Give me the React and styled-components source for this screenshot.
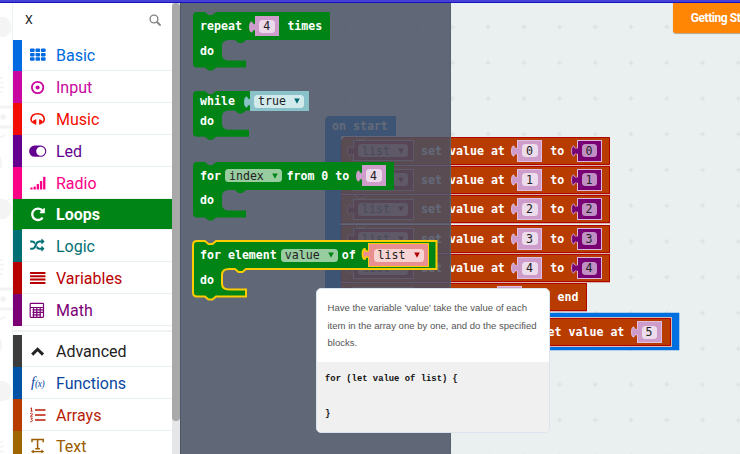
import React from "react";
import styled, { createGlobalStyle, css } from "styled-components";

const GlobalStyle = createGlobalStyle`
  * { box-sizing: border-box; }
  body { margin: 0; overflow: hidden; background: #fff; }
`;

const GREEN = "#008415";
const MONO = '"DejaVu Sans Mono", monospace';

/* ---------- page frame ---------- */

const Page = styled.div`
  width: 740px;
  height: 454px;
  overflow: hidden;
  display: flex;
  flex-direction: column;
  font-family: Roboto, sans-serif;
`;
const TopBar = styled.header`
  flex: none;
  height: 3px;
  background: #4741d6;
  border-bottom: 1px solid #1512c4;
`;
const Main = styled.main`
  flex: 1;
  min-height: 0;
  display: flex;
`;
const Margin = styled.div`
  flex: none;
  width: 13px;
  overflow: hidden;
  border-right: 1px solid #ecf3f4;
`;

/* ---------- toolbox ---------- */

const Toolbox = styled.nav`
  flex: none;
  width: 159px;
  background: #fff;
  overflow: hidden;
`;
const Search = styled.div`
  height: 36.6px;
  display: flex;
  align-items: center;
  justify-content: space-between;
  padding: 0 11px 3px 12px;
  font-size: 12.3px;
  color: #222;
`;
const Category = styled.div`
  display: flex;
  align-items: center;
  height: 31.8px;
  border-left: 9px solid ${(p) => p.$edge || p.$color};
  padding-left: 7px;
  gap: 11px;
  font-size: 16px;
  line-height: 20px;
  color: ${(p) => p.$color};
  box-shadow: inset 0 -1px 0 #e9f1f2;
  ${(p) =>
    p.$active &&
    css`
      background: ${GREEN};
      color: #fff;
      font-weight: 700;
    `}
  svg { flex: none; overflow: visible; }
`;
const Label = styled.span`
  padding-top: 2px;
`;
const Divider = styled.div`
  height: 9.4px;
  padding-top: 4px;
  &::after {
    content: "";
    display: block;
    height: 2px;
    background: #eef3f4;
  }
`;
const ScrollTrack = styled.div`
  flex: none;
  width: 8px;
  background: #e4e6e8;
`;
const ScrollThumb = styled.div`
  height: 418px;
  border-radius: 4px;
  background: #a9a9a9;
`;

/* ---------- workspace ---------- */

const Workspace = styled.section`
  position: relative;
  flex: 1;
  overflow: hidden;
  background: #eaf0f0;
`;
const Grid = styled.svg`
  display: block;
`;
const Flyout = styled.aside`
  position: absolute;
  left: 0;
  top: 0;
  width: 271px;
  height: 451px;
  background: rgba(72, 80, 97, 0.855);
  border-left: 1px solid #4d5666;
  border-right: 1px solid #566170;
`;
const Node = styled.div`
  position: absolute;
  left: ${(p) => p.$x - 180}px;
  top: ${(p) => p.$y - 3}px;
  font: 700 11.6px/14px ${MONO};
  color: #fff;
  white-space: pre;
`;
const Shape = styled.svg`
  position: absolute;
  left: 0;
  top: 0;
  overflow: visible;
`;
const Row = styled.div`
  position: relative;
  display: flex;
  align-items: center;
  height: ${(p) => p.$h}px;
  padding-left: ${(p) => p.$pad ?? 7}px;
`;
const Word = styled.span`
  margin-left: ${(p) => p.$ml || 0}px;
`;

const ReporterBox = styled.span`
  position: relative;
  flex: none;
  display: flex;
  align-items: center;
  justify-content: center;
  width: ${(p) => p.$w}px;
  height: ${(p) => p.$h || 20.5}px;
  margin-left: ${(p) => p.$ml}px;
  background: ${(p) => p.$fill};
  border: ${(p) => p.$bw || 1}px solid ${(p) => p.$line || p.$fill};
`;
const Tab = styled.svg`
  position: absolute;
  left: -8px;
  top: 4px;
  overflow: visible;
`;
const Pill = styled.span`
  flex: none;
  display: flex;
  align-items: center;
  justify-content: space-between;
  height: 13px;
  width: ${(p) => p.$w}px;
  margin-left: ${(p) => p.$ml || 0}px;
  padding: 0 4px;
  border-radius: 3.5px;
  background: ${(p) => p.$bg};
  color: ${(p) => p.$ink || "#222"};
  font-weight: 400;
`;

const Arrow = ({ color }) => (
  <svg width="6" height="6" viewBox="0 0 6 6">
    <path d="M0.2 0.6H5.8L3 5.8Z" fill={color} />
  </svg>
);

function Reporter({ fill, line, outline, children, ...rest }) {
  return (
    <ReporterBox $fill={fill} $line={line} {...rest}>
      <Tab width="8" height="12" viewBox="0 0 8 12">
        <path
          d="M7.6 3.2C5.6 3.9 4.4 3 3.8 0.9C0.8 0.300 0.8 11.700 3.8 11.1C4.4 9 5.6 8.4 7.6 9"
          fill={fill}
          stroke={outline || fill}
          strokeWidth={rest.$bw ? 1.8 : 1}
        />
        <path d="M6 3.6H9V8.6H6Z" fill={fill} />
      </Tab>
      {children}
    </ReporterBox>
  );
}

const NumberBlock = ({ value, ml }) => (
  <Reporter fill="#cf9dcb" $w={24} $ml={ml}>
    <Pill $w={15.5} $bg="#ecd9ea">{value}</Pill>
  </Reporter>
);

function clawPath(w, h, open, foot) {
  const b = h + open;
  const t = b + 7;
  return (
    `M0 4Q0 0 4 0H12l3.5 3h4l3.5-3H${w}V${h}H53l-3.5 3h-4l-3.5-3H36` +
    `Q29 ${h} 29 ${h + 6}V${b - 6}Q29 ${b} 36 ${b}H${foot}V${t}H23` +
    `l-3.5 3h-4l-3.5-3H4Q0 ${t} 0 ${t - 4}Z`
  );
}

function ClawBlock({ x, y, w, h, open = 20.5, foot = 53, selected, children }) {
  return (
    <Node $x={x} $y={y}>
      <Shape width={w} height={h + open + 10}>
        <path
          d={clawPath(w, h, open, foot)}
          fill={GREEN}
          stroke={selected ? "#fc0" : "none"}
          strokeWidth="2"
        />
      </Shape>
      <Row $h={h}>{children}</Row>
      <Row $h={open + 1} $pad={7}>
        <Word>do</Word>
      </Row>
    </Node>
  );
}

/* ---------- program on the canvas ---------- */

const Stack = styled.div`
  display: flex;
  flex-direction: column;
  align-items: flex-start;
  gap: 1.4px;
`;
const Statement = styled.div`
  position: relative;
  display: flex;
  align-items: center;
  height: 28px;
  width: ${(p) => p.$w}px;
  padding-left: 10.6px;
  background: #b83b00;
  border: solid #b30300;
  border-width: 1px 1px 1.5px;
  box-shadow: 0 0.8px 0 #d3a59e;
  &:first-child { border-top-left-radius: 5px; }
`;
const Outlined = styled(Statement)`
  box-shadow: 0 0 0 1px #d9bbb5;
`;
const NotchLine = styled.svg`
  position: absolute;
  left: 12px;
  top: -1.5px;
`;

const ListBlock = ({ ml = 0 }) => (
  <Reporter fill="#a80d10" line="#dc9a9c" outline="#dc9a9c" $w={61} $h={21.5} $ml={ml}>
    <Pill $w={50} $bg="#d98c8c" $ink="#3a3030">
      list
      <Arrow color="#8b0000" />
    </Pill>
  </Reporter>
);
const IndexBlock = ({ value }) => (
  <Reporter fill="#cd9cca" line="#e0bfe0" outline="#e0c4e0" $w={25} $h={22} $ml={12.5}>
    <Pill $w={15.5} $bg="#ecdcec">{value}</Pill>
  </Reporter>
);
const MathBlock = ({ value }) => (
  <Reporter fill="#780073" line="#dcb6dc" outline="#c9a0c9" $w={25} $h={22} $ml={12.5}>
    <Pill $w={15.5} $bg="#c08fc4">{value}</Pill>
  </Reporter>
);

function SetValue({ n }) {
  return (
    <Statement $w={268.5}>
      <NotchLine width="14" height="5">
        <path d="M0 .7h1.500l3.500 3h4l3.500-3" fill="none" stroke="#d3a59e" strokeWidth=".9" />
      </NotchLine>
      <ListBlock />
      <Word $ml={7.5}>set value at</Word>
      <IndexBlock value={n} />
      <Word $ml={8}>to</Word>
      <MathBlock value={n} />
    </Statement>
  );
}

function Program() {
  return (
    <>
      <Node $x={325} $y={116}>
        <Shape width="360" height="240">
          <path d="M0 5Q0 0 5 0H71V20H16V196.800H354.300V234.300H0Z" fill="#0070e0" />
        </Shape>
        <Row $h={20}>
          <Word>on start</Word>
        </Row>
      </Node>
      <Node $x={341} $y={136.5}>
        <Stack>
          {[0, 1, 2, 3, 4].map((n) => (
            <SetValue key={n} n={n} />
          ))}
          <Statement $w={245.5}>
            <ListBlock />
            <Word $ml={8}>add value</Word>
            <Reporter fill="#cd9cca" line="#e0bfe0" $w={25} $h={22} $ml={13} />
            <Word $ml={35}>end</Word>
          </Statement>
        </Stack>
      </Node>
      <Node $x={460} $y={318}>
        <Outlined $w={210.5}>
          <ListBlock />
          <Word $ml={8}>get value at</Word>
          <IndexBlock value={5} />
        </Outlined>
      </Node>
    </>
  );
}

const Started = styled.button`
  position: absolute;
  left: 493.3px;
  top: 0;
  width: 100px;
  height: 29.7px;
  padding: 2px 0 0 17.5px;
  border: 0;
  border-radius: 0 0 3px 3px;
  background: #ff8605;
  box-shadow: 0 0.5px 1px #b9a58c;
  color: #fff;
  text-align: left;
  white-space: nowrap;
  font: 700 12px/27.7px Roboto, sans-serif;
  letter-spacing: -0.45px;
`;

/* ---------- tooltip ---------- */

const Tooltip = styled.div`
  position: absolute;
  left: 136px;
  top: 285.3px;
  width: 234px;
  height: 145px;
  display: flex;
  flex-direction: column;
  overflow: hidden;
  border: 1px solid #dbe3ec;
  border-radius: 5px;
  background: #fff;
`;
const Description = styled.p`
  margin: 0;
  height: 73px;
  padding: 10px 0 0 10.5px;
  font: 9.56px/17.4px "Liberation Sans", sans-serif;
  color: #555;
  white-space: pre;
`;
const Code = styled.pre`
  flex: 1;
  margin: 0;
  padding: 8.5px 0 0 8px;
  background: #f0f0f0;
  color: #111;
  font: 700 8.87px/17.5px "Liberation Mono", monospace;
`;

/* ---------- icons ---------- */

const Icon = ({ children, w = 16, vb }) => (
  <svg width={w} height="16" viewBox={vb || "0 0 16 16"} fill="currentColor">
    {children}
  </svg>
);
const GridIcon = () => (
  <Icon>
    {[0, 1, 2].map((r) =>
      [0, 1, 2].map((c) => (
        <rect key={`${r}${c}`} x={1 + c * 5.5} y={1.5 + r * 4.4} width="4.600" height="3.500" rx=".8" />
      ))
    )}
  </Icon>
);
const TargetIcon = () => (
  <Icon>
    <circle cx="8.600" cy="8.500" r="5.700" fill="none" stroke="currentColor" strokeWidth="1.800" />
    <circle cx="8.600" cy="8.500" r="2" />
  </Icon>
);
const HeadphonesIcon = () => (
  <Icon>
    <path
      d="M3.700 11.600C2.200 10.500 2 9.300 2 8.300C2.300 4.600 5 2.700 8.700 2.700S15 4.600 15.300 8.300C15.300 9.300 15.100 10.500 13.700 11.600"
      fill="none"
      stroke="currentColor"
      strokeWidth="1.600"
    />
    <path d="M4 9.700L6.700 8.300Q7.300 8.200 7.300 8.800V13.300Q7 14 6.300 13.400L3.500 12ZM13.400 9.700L10.700 8.300Q10.100 8.200 10.100 8.800V13.300Q10.400 14 11.100 13.400L13.900 12Z" />
  </Icon>
);
const ToggleIcon = () => (
  <Icon>
    <path
      fillRule="evenodd"
      d="M5.700 2.600H11.700A5.600 5.600 0 0 1 11.700 13.800H5.700A5.600 5.600 0 0 1 5.700 2.600ZM11.700 3.700A4.500 4.500 0 1 0 11.700 12.700A4.500 4.500 0 1 0 11.700 3.700Z"
    />
  </Icon>
);
const SignalIcon = () => (
  <Icon>
    {[2, 3, 5.5, 8.7, 12.8].map((h, i) => (
      <rect key={h} x={1.3 + i * 3.2} y={14.6 - h} width="2.300" height={h} rx=".5" />
    ))}
  </Icon>
);
const RepeatIcon = () => (
  <Icon vb="-110 -30 1790 1790">
    <path d="M1664 256v448q0 26-19 45t-45 19h-448q-42 0-59-40-17-39 14-69l138-138q-148-137-349-137-104 0-198.500 40.500t-163.500 109.500-109.500 163.500-40.500 198.500 40.500 198.500 109.500 163.500 163.500 109.500 198.500 40.500q119 0 225-52t179-147q7-10 23-12 15 0 25 9l137 138q9 8 9.500 20.500t-7.500 22.500q-109 132-264 204.500t-327 72.500q-156 0-298-61t-245-164-164-245-61-298 61-298 164-245 245-164 298-61q147 0 284.500 55.500t244.500 156.500l130-129q29-31 70-14 39 17 39 59z" />
  </Icon>
);
const ShuffleIcon = () => (
  <Icon vb="-150 -60 2010 2010">
    <path d="M666 481q-60 92-137 273-22-45-37-72.500t-40.500-63.500-51-56.500-63-35-81.500-14.500h-224q-14 0-23-9t-9-23v-192q0-14 9-23t23-9h224q250 0 410 225zm1126 799q0 14-9 23l-320 320q-9 9-23 9-13 0-22.500-9.500t-9.500-22.500v-192q-32 0-85 .5t-81 1-73-1-71-5-64-10.500-63-18.500-58-28.500-59-40-55-53.500-56-69.500q59-93 136-273 22 45 37 72.500t40.500 63.500 51 56.500 63 35 81.500 14.500h256v-192q0-14 9-23t23-9q12 0 24 10l319 319q9 9 9 23zm0-896q0 14-9 23l-320 320q-9 9-23 9-13 0-22.500-9.500t-9.500-22.500v-192h-256q-48 0-87 15t-69 45-51 61.500-45 77.500q-32 62-78 171-29 66-49.500 111t-54 105-64 100-74 83-90 68.500-106.500 42-128 16.500h-224q-14 0-23-9t-9-23v-192q0-14 9-23t23-9h224q48 0 87-15t69-45 51-61.500 45-77.500q32-62 78-171 29-66 49.500-111t54-105 64-100 74-83 90-68.500 106.500-42 128-16.500h256v-192q0-14 9-23t23-9q12 0 24 10l319 319q9 9 9 23z" />
  </Icon>
);
const LinesIcon = () => (
  <Icon>
    {[2, 5.3, 8.6, 11.9].map((y) => (
      <rect key={y} x="1" y={y} width="15.500" height="2" rx=".3" />
    ))}
  </Icon>
);
const CalculatorIcon = () => (
  <Icon>
    <path
      fill="none"
      stroke="currentColor"
      strokeWidth="1.200"
      d="M2 1.300H13.700Q14.500 1.300 14.500 2.100V14.500Q14.500 15.300 13.700 15.300H2Q1.200 15.300 1.200 14.500V2.100Q1.200 1.300 2 1.300ZM1.200 5.500H14.500"
    />
    <path
      fill="none"
      stroke="currentColor"
      strokeWidth="1.200"
      d="M3.500 7.900H14.500M3.500 10.300H14.500M3.500 12.800H12M4.500 6V15M7.800 6V15M11.200 6V15"
    />
  </Icon>
);
const ChevronIcon = () => (
  <Icon>
    <path d="M3.200 11.600L8.600 6.300L14 11.600" fill="none" stroke="currentColor" strokeWidth="3" />
  </Icon>
);
const FxGlyph = styled.span`
  flex: none;
  width: 16px;
  padding-left: 2px;
  display: flex;
  align-items: baseline;
  font: italic 14.5px/16px "Liberation Serif", serif;
  small { font-size: 9.5px; letter-spacing: -0.5px; }
`;
const OrderedIcon = () => (
  <Icon>
    <path d="M6 3H16.500M6 8H16.500M6 13H16.500" stroke="currentColor" strokeWidth="1.700" />
    <path
      d="M1.500 1.500L2.500.8V4M1.300 4.100H3.700M1.300 6.600Q2.500 5.600 3.300 6.600T1.400 9.200H3.700M1.400 11H3.400L2.400 12.400Q3.600 12.700 3.300 13.900T1.300 14.800"
      fill="none"
      stroke="currentColor"
      strokeWidth=".9"
    />
  </Icon>
);
const TextIcon = () => (
  <Icon>
    <path
      d="M3 4.200V1.500H14.200V4.200M8.600 1.500V10.500M6.300 10.700H10.900"
      fill="none"
      stroke="currentColor"
      strokeWidth="1.500"
    />
    <path d="M4 13.600H13.200" stroke="currentColor" strokeWidth="1.300" />
    <path d="M2 13.600L4.800 11.600V15.600ZM15.200 13.600L12.400 11.600V15.600Z" />
  </Icon>
);
const SearchIcon = () => (
  <svg width="12" height="12" viewBox="0 0 12 12" fill="none" stroke="#858585">
    <circle cx="5" cy="5" r="3.900" strokeWidth="1.400" />
    <path d="M8 8L11 11" strokeWidth="1.800" strokeLinecap="round" />
  </svg>
);

const BASE = [
  ["Basic", "#006ae0", GridIcon],
  ["Input", "#c9069f", TargetIcon],
  ["Music", "#f20d00", HeadphonesIcon],
  ["Led", "#64008f", ToggleIcon],
  ["Radio", "#fb0087", SignalIcon],
  ["Loops", GREEN, RepeatIcon],
  ["Logic", "#006f73", ShuffleIcon],
  ["Variables", "#b90000", LinesIcon],
  ["Math", "#7b0075", CalculatorIcon],
];
const FxIcon = () => (
  <FxGlyph>
    f<small>(x)</small>
  </FxGlyph>
);
const ADVANCED = [
  ["Advanced", "#222", ChevronIcon, "#3c3c3c"],
  ["Functions", "#0a479f", FxIcon, "#0152a5"],
  ["Arrays", "#b91c05", OrderedIcon, "#b83b00"],
  ["Text", "#9b5c00", TextIcon, "#9f6600"],
];

const renderCategory = ([name, color, Glyph, edge]) => (
  <Category key={name} $color={color} $edge={edge} $active={name === "Loops"}>
    <Glyph />
    <Label>{name}</Label>
  </Category>
);

const Doodles = () => (
  <svg width="12" height="451">
    <defs>
      <pattern id="doodles" width="12" height="182" patternUnits="userSpaceOnUse">
        <circle cx="1.500" cy="24" r="10.300" fill="#f4f4f4" />
        <g fill="none" stroke="#f3f3f3" strokeWidth="1.500">
          <path d="M0 76L3 74M0 80L4 79M0 84L4 85M0 88L3 90" />
          <path d="M0 104H12M0 124H12" strokeWidth="3" />
          <circle cx="3" cy="114" r="2" fill="#f3f3f3" />
          <path d="M0 134Q4 134 5 131M0 154Q2 160 0 166" />
        </g>
      </pattern>
    </defs>
    <rect width="12" height="451" fill="url(#doodles)" />
  </svg>
);

export default function App() {
  return (
    <Page>
      <GlobalStyle />
      <TopBar />
      <Main>
        <Margin>
          <Doodles />
        </Margin>
        <Toolbox>
          <Search>
            X
            <SearchIcon />
          </Search>
          {BASE.map(renderCategory)}
          <Divider />
          {ADVANCED.map(renderCategory)}
        </Toolbox>
        <ScrollTrack>
          <ScrollThumb />
        </ScrollTrack>
        <Workspace>
          <Grid width="560" height="451">
            <defs>
              <pattern id="crosses" x="4.150" y="6.100" width="35.750" height="35.750" patternUnits="userSpaceOnUse">
                <path d="M17.900 15.400V20.400M15.400 17.900H20.400" stroke="#d6dddd" />
              </pattern>
            </defs>
            <rect width="560" height="451" fill="url(#crosses)" />
          </Grid>
          <Program />
          <Flyout />
          <ClawBlock x={193} y={12} w={137} h={28}>
            <Word>repeat</Word>
            <NumberBlock value={4} ml={13} />
            <Word $ml={8.5}>times</Word>
          </ClawBlock>
          <ClawBlock x={193} y={91.3} w={57} h={19.5} open={19.2} foot={56}>
            <Word>while</Word>
            <Reporter fill="#89c2c8" $w={59} $h={20} $ml={14.7}>
              <Pill $w={50} $bg="#d2eaec">
                true
                <Arrow color="#006970" />
              </Pill>
            </Reporter>
          </ClawBlock>
          <ClawBlock x={193} y={161.5} w={201} h={28}>
            <Word>for</Word>
            <Pill $w={57} $ml={4} $bg="#98cda0">
              index
              <Arrow color={GREEN} />
            </Pill>
            <Word $ml={4.5}>from 0 to</Word>
            <NumberBlock value={4} ml={12.5} />
          </ClawBlock>
          <ClawBlock x={193} y={241} w={243.5} h={28} selected>
            <Word>for element</Word>
            <Pill $w={57} $ml={4} $bg="#98cda0">
              value
              <Arrow color={GREEN} />
            </Pill>
            <Word $ml={4}>of</Word>
            <Reporter fill="#ea8f8f" line="#fc0" outline="#fc0" $bw={1.6} $w={61.5} $h={23.5} $ml={12}>
              <Pill $w={50} $bg="#f8d3d3">
                list
                <Arrow color="#b00000" />
              </Pill>
            </Reporter>
          </ClawBlock>
          <Started>Getting Started</Started>
          <Tooltip>
            <Description>
              {"Have the variable 'value' take the value of each\nitem in the array one by one, and do the specified\nblocks."}
            </Description>
            <Code>{"for (let value of list) {\n\n}"}</Code>
          </Tooltip>
        </Workspace>
      </Main>
    </Page>
  );
}
